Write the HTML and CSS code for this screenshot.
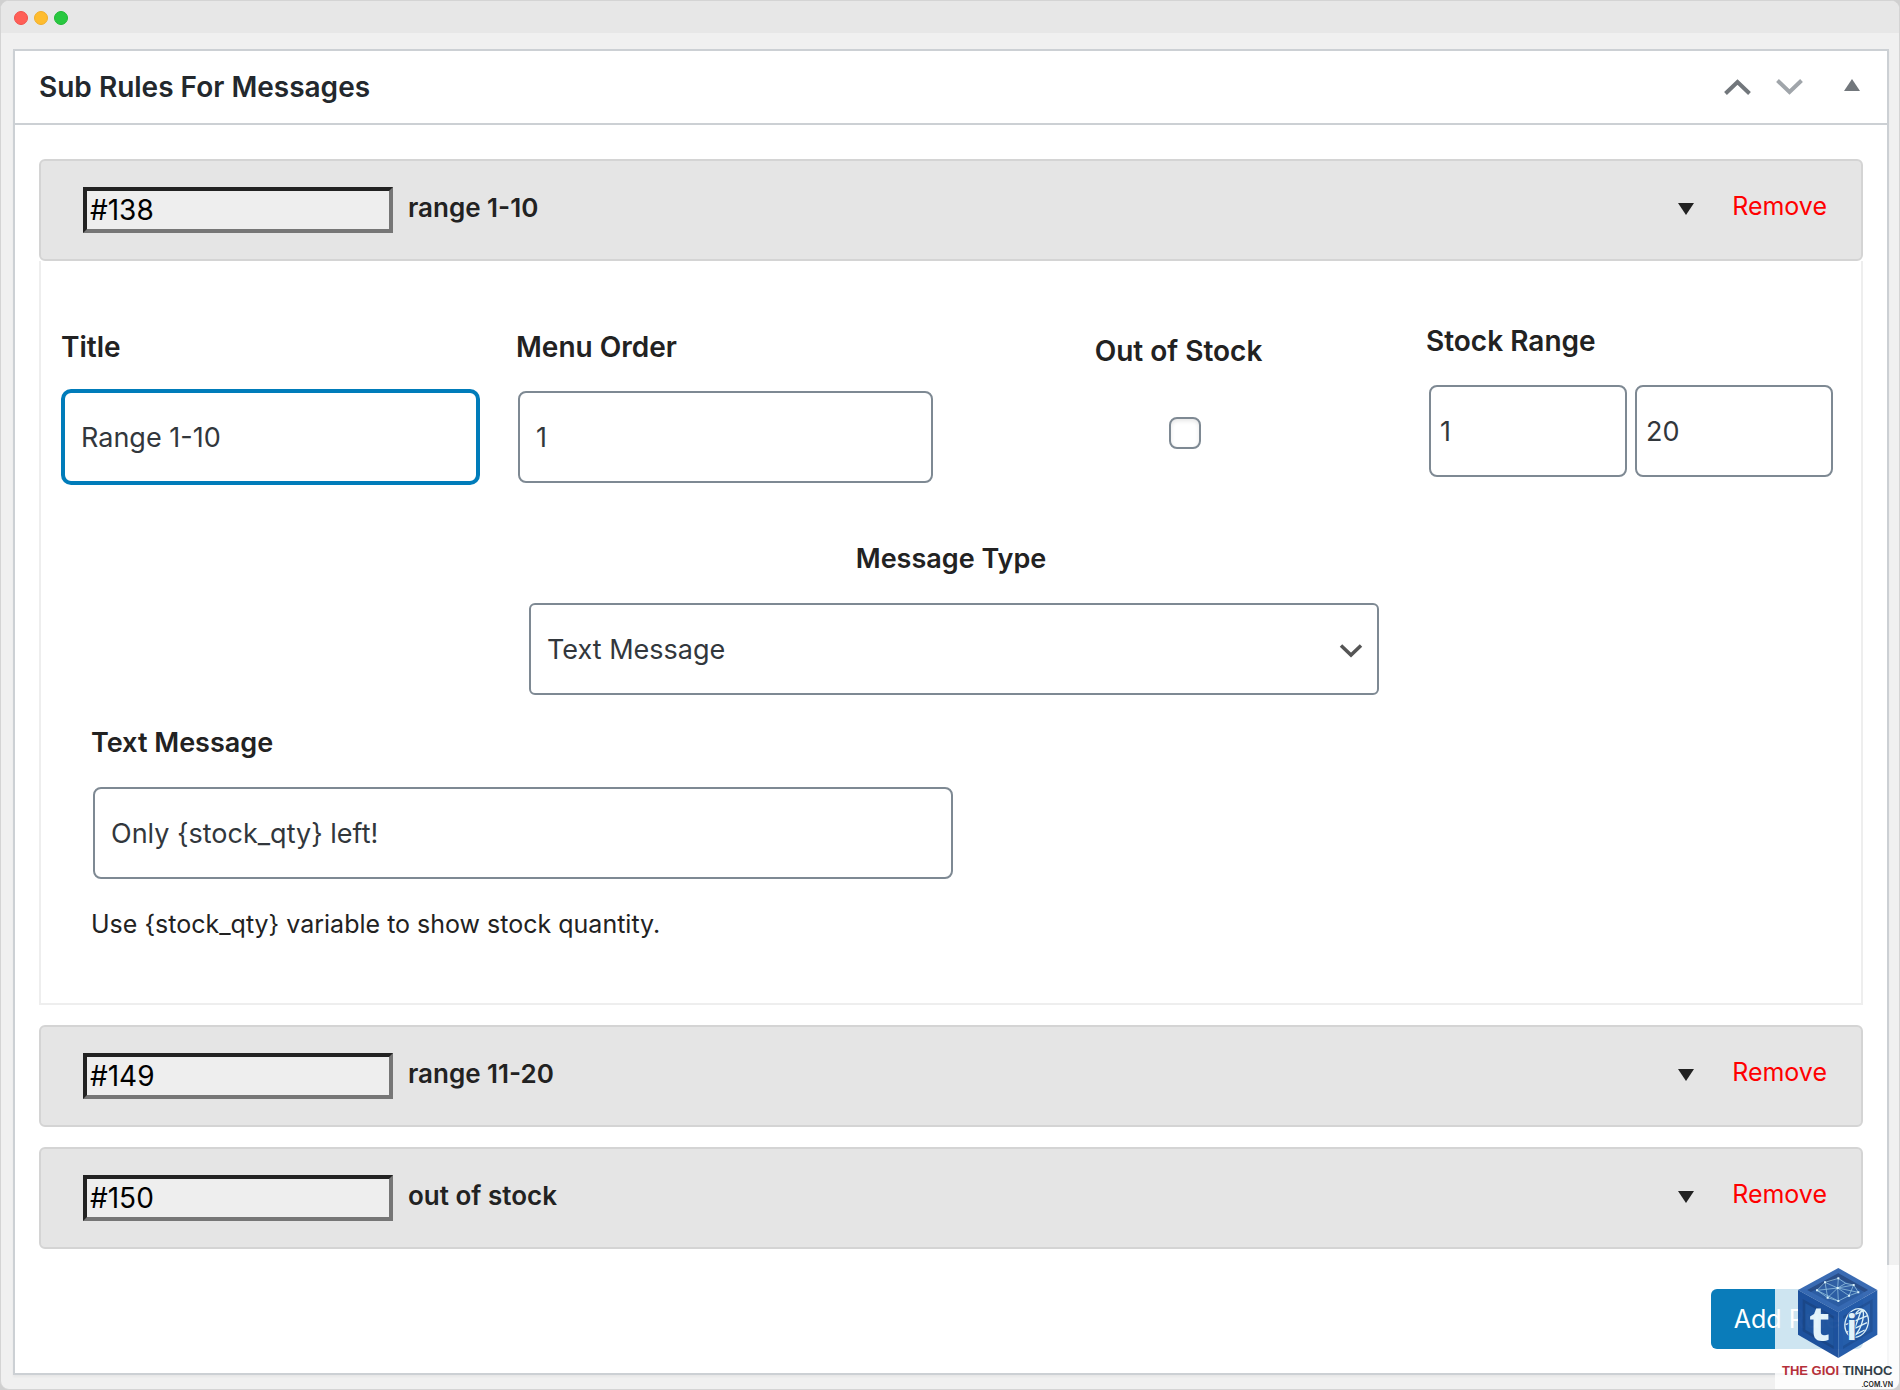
FILE: index.html
```html
<!DOCTYPE html>
<html lang="en">
<head>
    <meta charset="UTF-8">
    <meta name="viewport" content="width=device-width, initial-scale=1.0">
    <title>Sub Rules For Messages</title>
    <link rel="stylesheet" href="styles.css">
</head>
<body>
    <div class="window">
        <div class="titlebar">
            <span class="dot dot-red"></span>
            <span class="dot dot-yellow"></span>
            <span class="dot dot-green"></span>
        </div>

        <div class="postbox">
            <div class="postbox-header">
                <h2>Sub Rules For Messages</h2>
                <div class="handle-actions">
                    <button type="button" class="icon-btn" aria-label="Move up">
                        <svg width="28" height="16" viewBox="0 0 28 16"><path d="M1.500 14.500 13.500 3 25.500 14.500" fill="none" stroke="#72777c" stroke-width="4"/></svg>
                    </button>
                    <button type="button" class="icon-btn" aria-label="Move down">
                        <svg width="28" height="16" viewBox="0 0 28 16"><path d="M1.500 1.500 13.500 13 25.500 1.500" fill="none" stroke="#a0a5aa" stroke-width="4"/></svg>
                    </button>
                    <button type="button" class="icon-btn toggle-panel" aria-label="Toggle panel">
                        <svg width="16" height="12" viewBox="0 0 16 12"><path d="M8 0 16 12H0z" fill="#72777c"/></svg>
                    </button>
                </div>
            </div>

            <div class="inside">
                <div class="rule">
                    <div class="rule-header">
                        <input type="text" class="rule-id" value="#138" aria-label="Rule ID" readonly>
                        <h3>range 1-10</h3>
                        <button type="button" class="icon-btn rule-toggle" aria-label="Toggle rule">
                            <svg width="16" height="12" viewBox="0 0 16 12"><path d="M0 0h16L8 12z" fill="#222"/></svg>
                        </button>
                        <a href="#" class="remove">Remove</a>
                    </div>
                    <div class="rule-content">
                        <div class="fields">
                            <div class="field">
                                <label for="title">Title</label>
                                <input type="text" id="title" class="text-input active" value="Range 1-10">
                            </div>
                            <div class="field">
                                <label for="menuOrder">Menu Order</label>
                                <input type="text" id="menuOrder" class="text-input" value="1">
                            </div>
                            <div class="field field-check">
                                <label for="outOfStock">Out of Stock</label>
                                <input type="checkbox" id="outOfStock">
                            </div>
                            <div class="field field-range">
                                <label for="stockFrom">Stock Range</label>
                                <div class="range-inputs">
                                    <input type="text" id="stockFrom" class="text-input" value="1">
                                    <input type="text" id="stockTo" class="text-input" value="20" aria-label="Stock range to">
                                </div>
                            </div>
                        </div>

                        <div class="message-type">
                            <label for="messageType">Message Type</label>
                            <div class="select-wrap">
                                <select id="messageType">
                                    <option>Text Message</option>
                                </select>
                                <svg class="select-arrow" width="24" height="14" viewBox="0 0 24 14"><path d="M2 1.500 12 11 22 1.500" fill="none" stroke="#555" stroke-width="3.500"/></svg>
                            </div>
                        </div>

                        <div class="text-message">
                            <label for="textMessage">Text Message</label>
                            <input type="text" id="textMessage" class="text-input" value="Only {stock_qty} left!">
                            <p>Use {stock_qty} variable to show stock quantity.</p>
                        </div>
                    </div>
                </div>

                <div class="rule">
                    <div class="rule-header">
                        <input type="text" class="rule-id" value="#149" aria-label="Rule ID" readonly>
                        <h3>range 11-20</h3>
                        <button type="button" class="icon-btn rule-toggle" aria-label="Toggle rule">
                            <svg width="16" height="12" viewBox="0 0 16 12"><path d="M0 0h16L8 12z" fill="#222"/></svg>
                        </button>
                        <a href="#" class="remove">Remove</a>
                    </div>
                </div>

                <div class="rule">
                    <div class="rule-header">
                        <input type="text" class="rule-id" value="#150" aria-label="Rule ID" readonly>
                        <h3>out of stock</h3>
                        <button type="button" class="icon-btn rule-toggle" aria-label="Toggle rule">
                            <svg width="16" height="12" viewBox="0 0 16 12"><path d="M0 0h16L8 12z" fill="#222"/></svg>
                        </button>
                        <a href="#" class="remove">Remove</a>
                    </div>
                </div>

                <div class="actions">
                    <button type="button" class="add-rule">Add Rule</button>
                </div>
            </div>
        </div>

        <div class="watermark">
            <svg class="cube" width="125" height="96" viewBox="0 0 375 288">
                <path d="M190 9 307 75 190 142 69 75z" fill="#2a5fad"/>
                <path d="M69 75 190 142V279L69 209z" fill="#0f4596"/>
                <path d="M307 75 190 142V279L307 209z" fill="#1550a3"/>
                <path d="M190 25 279 75 190 125 97 75z" fill="#1f529d"/>
                <path d="M190 25 279 75 268 81 190 38 108 81 97 75z" fill="#173f80"/>
                <path d="M83 102 176 153V252L83 199z" fill="#0b3a80"/>
                <path d="M91 115 176 162V243L91 194z" fill="#124a99"/>
                <path d="M293 102 204 153V252L293 199z" fill="#104490"/>
                <path d="M285 115 204 162V243L285 194z" fill="#1753a5"/>
                <!-- network on the top face -->
                <path d="M126 76 150 52 190 40 212 55 236 60 250 82 222 92 190 108 158 98zM150 52l38 17 24-14M126 76l62-7 34 23M158 98l30-29 2 39M236 60l-48 9 62 13M150 52l8 46M190 40l-2 29M126 76l64 32M222 92l14-32" fill="none" stroke="#9fd0e8" stroke-width="2"/>
                <path d="M147 49h6v6h-6zM187 37h6v6h-6zM233 57h6v6h-6zM247 79h6v6h-6zM185 66h6v6h-6zM155 95h6v6h-6zM187 105h6v6h-6zM219 89h6v6h-6zM123 73h6v6h-6z" fill="#d8f1fa"/>
                <!-- globe -->
                <g fill="none" stroke="#dcf1f8" stroke-width="4">
                    <ellipse cx="245" cy="174" rx="34" ry="44" transform="rotate(20 245 174)"/>
                    <ellipse cx="245" cy="174" rx="15" ry="43" transform="rotate(20 245 174)"/>
                    <path d="M222 156l48-20M212 179l66-27M214 202l62-29M229 215l40-20M260 133l-30 82"/>
                </g>
                <text x="102" y="227" class="cube-t">t</text>
                <text x="214" y="225" class="cube-i">i</text>
            </svg>
            <div class="brand"><span>THE GIOI</span> TINHOC</div>
            <div class="domain">.COM.VN</div>
        </div>
    </div>
</body>
</html>
```

FILE: styles.css
```css
* { box-sizing: border-box; }
body { margin: 0; background: #d0d0d0; color: #222; font-family: Inter, "Liberation Sans", sans-serif; font-size: 25px; }
h2, h3, p { margin: 0; }
input, select, button { font-family: inherit; }
label { display: block; font-size: 28px; font-weight: 600; line-height: 36px; }

.window { position: relative; min-height: 100vh; background: #f0f0f0; border: 1px solid #d4d4d4; border-radius: 9px; overflow: hidden; padding-bottom: 14px; }
.titlebar { display: flex; align-items: center; gap: 6px; height: 32px; padding: 2px 13px 0; background: #e7e7e7; }
.dot { width: 14px; height: 14px; border-radius: 50%; border: 1px solid; }
.dot-red { background: #ff5f57; border-color: #f2514c; }
.dot-yellow { background: #febc2e; border-color: #f0ae2c; }
.dot-green { background: #28c840; border-color: #1fb834; }

.postbox { margin: 16px 10px 0 12px; background: #fff; border: 2px solid #ccd0d4; box-shadow: 0 2px 2px rgba(0, 0, 0, 0.04); }
.postbox-header { display: flex; justify-content: space-between; align-items: center; height: 74px; padding: 0 27px 0 24px; border-bottom: 2px solid #ccd0d4; }
.postbox-header h2 { font-size: 28px; font-weight: 600; line-height: 36px; color: #23282d; }
.handle-actions { display: flex; align-items: center; gap: 24px; }
.icon-btn { display: block; padding: 0; border: none; background: none; cursor: pointer; }
.icon-btn svg { display: block; }
.toggle-panel { margin-left: 16px; padding-bottom: 4px; }

.inside { padding: 34px 24px 24px; }
.rule { margin-bottom: 20px; }
.rule-header { display: flex; align-items: flex-start; padding: 26px 34px 26px 42px; background: #e5e5e5; border: 2px solid #d4d4d4; border-radius: 6px; }
.rule-id { width: 310px; height: 46px; padding: 0 3px; font-size: 28px; color: #000; background: #eee; border: 4px solid; border-color: #222 #767676 #767676 #222; }
.rule-header h3 { margin-left: 15px; font-size: 26px; font-weight: 600; line-height: 42px; }
.rule-toggle { height: 44px; margin-left: auto; }
.remove { margin-left: 38px; color: #f00; font-size: 25px; line-height: 38px; text-decoration: none; }

.rule-content { padding: 68px 0 61px; border: 2px solid #eee; border-top: none; }
.fields { display: grid; grid-template-columns: repeat(4, 1fr); align-items: start; }
.field { padding: 0 20px; }
.text-input, select { display: block; width: 100%; height: 92px; margin: 26px 0 0 2px; padding: 0 16px; font-size: 27px; color: #32373c; background: #fff; border: 2px solid #7e8993; border-radius: 8px; }
.text-input.active { border-color: #007cba; box-shadow: 0 0 0 2px #007cba; outline: none; }
.field-check { padding-top: 4px; text-align: center; }
.field-check input { appearance: none; width: 32px; height: 32px; margin: 48px 0 0 12px; background: #fff; border: 2px solid #7e8993; border-radius: 8px; box-shadow: inset 0 2px 4px rgba(0, 0, 0, 0.1); }
.field-range { margin-top: -6px; }
.range-inputs { display: flex; gap: 8px; margin: 26px 8px 0 3px; }
.range-inputs .text-input { flex: 1; min-width: 0; margin: 0; padding: 0 9px; }

.message-type { display: flex; flex-direction: column; align-items: center; margin-top: 58px; }
.message-type label, .text-message label { font-size: 27px; }
.select-wrap { position: relative; width: 100%; max-width: 850px; }
select { appearance: none; margin-left: 3px; border-radius: 6px; }
.select-arrow { position: absolute; right: 13px; bottom: 37px; pointer-events: none; }

.text-message { width: 50%; margin-top: 30px; padding-left: 50px; }
.text-message p { margin-top: 27px; line-height: 36px; }

.actions { display: flex; justify-content: flex-end; margin-top: 40px; }
.add-rule { width: 152px; height: 60px; padding: 0; font-size: 25px; color: #fff; background: #0a7cba; border: none; border-radius: 6px; cursor: pointer; }

.watermark { position: absolute; right: -1px; bottom: -1px; width: 125px; height: 125px; background: rgba(255, 255, 255, 0.8); }
.cube { display: block; opacity: 0.92; }
.cube-t { font: bold 146px "Open Sans", sans-serif; fill: #e4f5fb; }
.cube-i { font: bold 108px "Open Sans", sans-serif; fill: #e4f5fb; stroke: #1753a5; stroke-width: 6px; paint-order: stroke; }
.brand { padding-left: 7px; color: #333f48; font: bold 13px/20px "Liberation Sans", sans-serif; white-space: nowrap; }
.brand span { color: #b5303a; }
.domain { padding-right: 7px; color: #222; font-size: 7px; font-weight: 600; line-height: 7px; text-align: right; }
```
